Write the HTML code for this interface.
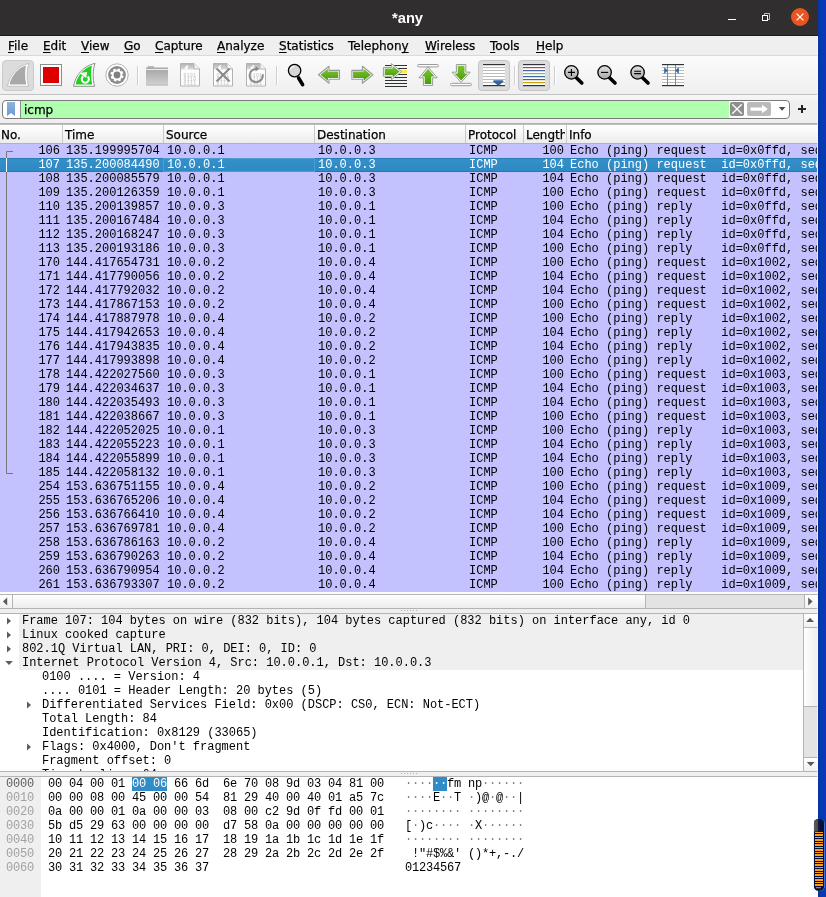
<!DOCTYPE html>
<html><head><meta charset="utf-8"><title>*any</title>
<style>
*{box-sizing:border-box;margin:0;padding:0}
html,body{width:826px;height:897px;overflow:hidden}
body{background:#063ab0;font-family:"DejaVu Sans","Liberation Sans",sans-serif;font-size:12px;color:#000;position:relative}
#desk{position:absolute;left:818px;top:0;width:8px;height:897px;background:linear-gradient(90deg,#07319f,#053ab3 35%,#063bb2)}
#win{position:absolute;left:0;top:0;width:818px;height:897px;background:#efefef;overflow:hidden;will-change:transform}
.abs{position:absolute}
#title{left:0;top:0;width:818px;height:35px;background:#302e2f}
#titleline{left:0;top:35px;width:818px;height:1px;background:#1c1b1c}
#title .t{position:absolute;left:392px;top:8px;color:#fff;font-weight:bold;font-size:14.7px;line-height:20px;font-family:"Liberation Sans",sans-serif;white-space:nowrap}
#menubar{left:0;top:36px;width:818px;height:19px;background:#efefef}
#menubar span{-webkit-text-stroke:0.25px #000;position:absolute;top:3px;font-size:12px;line-height:14px;white-space:nowrap}
#menubar u{text-decoration:underline;text-underline-offset:2px;text-decoration-thickness:1px}
#mline{left:0;top:55px;width:818px;height:1px;background:#d9d9d9}
#toolbar{left:0;top:56px;width:818px;height:38px;background:linear-gradient(#fbfbfb,#efefef)}
#tline{left:0;top:94px;width:818px;height:1px;background:#c3c3c3}
#filterbar{left:0;top:95px;width:818px;height:28px;background:linear-gradient(#f7f7f7,#efefef 30%)}
#finput{left:2px;top:100px;width:788px;height:19px;border:1px solid #7b7b7b;border-radius:4px;background:#fff;overflow:hidden}
#fgreen{left:17px;top:0;width:709px;height:17px;background:#afffaf;border-left:1px solid #8f8f8f}
#ftext{-webkit-text-stroke:0.25px #000;left:24px;top:103px;font-size:12px;line-height:14px}
/* packet list */
#plist{left:0;top:123px;width:818px;height:470px;background:#c4c1ff}
#pheadtop{left:0;top:123px;width:818px;height:2px;background:linear-gradient(#a9a9a9,#c6c6c6)}
#phead{left:0;top:125px;width:818px;height:19px;background:linear-gradient(#ffffff,#ececec);border-bottom:1px solid #b2b2b2}
#phead span{-webkit-text-stroke:0.25px #000;position:absolute;top:3px;font-size:12px;line-height:14px;white-space:nowrap}
#phead i{position:absolute;top:0;width:1px;height:18px;background:#c9c9c9}
#rows{left:0;top:144px;width:817px;height:448px;overflow:hidden;font-family:"Liberation Mono",monospace;font-size:12px;background:#c4c1ff}
.r{position:relative;height:14px;line-height:14px;white-space:pre}
.r span{position:absolute;top:0;height:14px}
.r.sel{background:linear-gradient(#3391cc,#2f88c1);color:#fff;box-shadow:inset 0 1px 0 #2a7db4,inset 0 -1px 0 #2878ad}
.c1{left:0;width:62px;text-align:right;padding-right:2px}
.c2{left:66px}.c3{left:167px}.c4{left:318px}.c5{left:469px}
.c6{left:524px;width:43px;text-align:right;padding-right:3px}
.c7{left:570px}
#focus{left:163px;top:14px;width:152px;height:14px;border:1px solid #4f9dd0;position:absolute}
/* scrollbars */
.sbtrack{background:#e3e3e3}
.sbbtn{background:linear-gradient(#ffffff,#f0f0f0)}
.sbh{background:linear-gradient(#ffffff,#ececec)}
.sbv{background:linear-gradient(90deg,#ffffff,#ececec)}
/* detail */
#detail{left:0;top:613px;width:818px;height:159px;background:#fff;border-top:1px solid #b4b4b4;border-bottom:1px solid #b4b4b4;overflow:hidden;font-family:"Liberation Mono",monospace;font-size:12px}
.d{position:absolute;left:0;width:804px;height:14px;line-height:14px;white-space:pre;letter-spacing:-0.018px}
.d b{position:absolute;left:19px;top:0;width:785px;height:14px;background:#efefef;font-weight:normal}
.d span{position:absolute;top:0}
.l0{left:22px}.l1{left:42px}
/* bytes */
#bytes{left:0;top:776px;width:818px;height:121px;background:#fff;border-top:1px solid #b4b4b4;overflow:hidden;font-family:"Liberation Mono",monospace;font-size:12px;letter-spacing:-0.2012px}
#boff{left:0;top:0;width:41px;height:121px;background:#efefef}
.b{position:absolute;left:0;height:14px;line-height:14px;white-space:pre;width:818px}
.b span{position:absolute;top:0}
.o{left:6px;color:#a2a2a2}
.h{left:48px}.a{left:405px}
.hs{position:absolute;background:#308cc6;height:14px;top:0}
.b em{font-style:normal;color:#fff}
.b s{text-decoration:none;color:#7d7d7d}
</style></head><body>
<div id="desk"></div>
<div id="win">
<div id="title" class="abs"><div class="t">*any</div>
<svg class="abs" style="left:710px;top:0" width="108" height="35" viewBox="710 0 108 35">
<rect x="728" y="19" width="8" height="1" fill="#fff"/>
<path d="M764.5,15 V13.5 H769.5 V19.5 H768" fill="none" stroke="#bdbdbd" stroke-width="1"/>
<rect x="762.5" y="15.5" width="5" height="5" fill="none" stroke="#fff" stroke-width="1"/>
<circle cx="800" cy="17" r="9" fill="#e95420"/>
<path d="M796.6,13.6 L803.4,20.4 M803.4,13.6 L796.6,20.4" stroke="#fff" stroke-width="1.3"/>
</svg>
</div>
<div id="titleline" class="abs"></div>
<div id="menubar" class="abs">
<span style="left:8px"><u>F</u>ile</span>
<span style="left:43px"><u>E</u>dit</span>
<span style="left:81px"><u>V</u>iew</span>
<span style="left:124px"><u>G</u>o</span>
<span style="left:155px"><u>C</u>apture</span>
<span style="left:217px"><u>A</u>nalyze</span>
<span style="left:279px"><u>S</u>tatistics</span>
<span style="left:348px">Telephon<u>y</u></span>
<span style="left:425px"><u>W</u>ireless</span>
<span style="left:490px"><u>T</u>ools</span>
<span style="left:536px"><u>H</u>elp</span>
</div>
<div id="mline" class="abs"></div>
<div id="toolbar" class="abs"></div>
<svg id="tb" class="abs" style="left:0;top:56px" width="818" height="38" viewBox="0 56 818 38">
<defs>
<linearGradient id="gg" x1="0" y1="0" x2="0" y2="1"><stop offset="0" stop-color="#7cc532"/><stop offset="1" stop-color="#4a9a0e"/></linearGradient>
<linearGradient id="lens" x1="0" y1="0" x2="0" y2="1"><stop offset="0" stop-color="#e2e2e2"/><stop offset="1" stop-color="#a8a8a8"/></linearGradient>
<linearGradient id="fold" x1="0" y1="0" x2="0" y2="1"><stop offset="0" stop-color="#a4a4a4"/><stop offset="1" stop-color="#d2d2d2"/></linearGradient>
<linearGradient id="fhead" x1="0" y1="0" x2="0" y2="1"><stop offset="0" stop-color="#b4b4b4"/><stop offset="1" stop-color="#dcdcdc"/></linearGradient>
<g id="fileic">
<path d="M0.5,0.5 H14 L19.5,6 V23 H0.5 Z" fill="#fdfdfd" stroke="#b2b2b2"/>
<path d="M1,1 H14 L14,6.5 H1 Z" fill="url(#fhead)"/>
<path d="M4.5,6.5 C4.5,3.5 6.5,2 8.5,2 C7.5,3.5 7.6,5 8.3,6.5 Z" fill="#fafafa"/>
<path d="M14,0.5 V6 H19.5" fill="#f4f4f4" stroke="#b2b2b2"/>
<text x="3.6" y="13.9" font-family="Liberation Mono,monospace" font-size="4.8" fill="#bdbdbd" textLength="12.6">0101</text>
<text x="3.6" y="18.2" font-family="Liberation Mono,monospace" font-size="4.8" fill="#bdbdbd" textLength="12.6">0110</text>
<text x="3.6" y="22.4" font-family="Liberation Mono,monospace" font-size="4.8" fill="#bdbdbd" textLength="12.6">0111</text>
</g>
<g id="mag">
<line x1="4.2" y1="4.6" x2="10.4" y2="10.6" stroke="#000" stroke-width="3.6" stroke-linecap="round"/>
<circle cx="0" cy="0" r="6.7" fill="url(#lens)" stroke="#000" stroke-width="1.3"/>
</g>
</defs>
<!-- pressed button bgs -->
<rect x="2.5" y="60.5" width="31" height="30" rx="3.5" fill="#dcdcdc" stroke="#cbcbcb"/>
<rect x="478.5" y="60.5" width="31" height="30" rx="3.5" fill="#dcdcdc" stroke="#c4c4c4"/>
<rect x="518.5" y="60.5" width="31" height="30" rx="3.5" fill="#dcdcdc" stroke="#c4c4c4"/>
<!-- separators -->
<g>
<rect x="137" y="66" width="1" height="19" fill="#cfcfcf"/><rect x="138" y="66" width="1" height="19" fill="#fff"/>
<rect x="276" y="66" width="1" height="19" fill="#cfcfcf"/><rect x="277" y="66" width="1" height="19" fill="#fff"/>
<rect x="514" y="66" width="1" height="19" fill="#cfcfcf"/><rect x="515" y="66" width="1" height="19" fill="#fff"/>
<rect x="554" y="66" width="1" height="19" fill="#cfcfcf"/><rect x="555" y="66" width="1" height="19" fill="#fff"/>
</g>
<!-- 1 shark fin gray -->
<path d="M7.5,86.3 C9.5,75 17.5,66 29,63.3 C26.6,70.5 26.6,79 28.6,86.3 Z" fill="#fff" stroke="#bcbcbc" stroke-width="0.9" stroke-linejoin="round"/>
<path d="M9.6,84.4 C11.5,75.5 18,68.4 25.9,65.6 C24.7,71.5 24.8,78.5 26.2,84.4 Z" fill="#a9a9a9"/>
<!-- 2 stop -->
<rect x="40.5" y="64.5" width="21" height="21" fill="#fff" stroke="#8e8e8e"/>
<rect x="43" y="67" width="16" height="16" fill="#dc0000"/>
<!-- 3 restart fin -->
<path d="M73.5,86.3 C75.5,75 83.5,66 95,63.3 C92.6,70.5 92.6,79 94.6,86.3 Z" fill="#fff" stroke="#8e8e8e" stroke-width="1" stroke-linejoin="round"/>
<path d="M75.6,84.4 C77.5,75.5 84,68.4 91.9,65.6 C90.7,71.5 90.8,78.5 92.2,84.4 Z" fill="#1fd01f"/>
<path d="M87.7,76.6 A3.55,3.55 0 1 1 83.2,76.3" fill="none" stroke="#fff" stroke-width="2.1"/>
<path d="M79.3,73 L87.1,72 L86.2,77.9 Z" fill="#fff"/>
<!-- 4 gear -->
<circle cx="117" cy="75" r="11.2" fill="#fff" stroke="#b4b4b4" stroke-width="1"/>
<circle cx="117" cy="75" r="8.9" fill="#8b8b8b"/>
<g fill="#fff" transform="translate(117 75) rotate(18)">
<circle r="5.3"/>
<g id="teeth"><rect x="-1.35" y="-6.6" width="2.7" height="13.2" rx="0.4"/><rect x="-6.6" y="-1.35" width="13.2" height="2.7" rx="0.4"/></g>
<use href="#teeth" transform="rotate(45)"/>
</g>
<circle cx="117" cy="75" r="3.4" fill="#808080"/>
<!-- 5 folder -->
<path d="M147.5,68 V66.6 Q147.5,66 148.2,66 H153.3 Q154,66 154,66.6 V68 Z" fill="#bdbdbd"/>
<rect x="146" y="67.7" width="22" height="17.8" rx="0.8" fill="url(#fold)"/>
<rect x="146" y="67.7" width="22" height="1.2" fill="#a2a2a2"/>
<rect x="146" y="68.9" width="22" height="1" fill="#f4f4f4"/>
<rect x="146" y="84.6" width="22" height="0.9" fill="#b8b8b8"/>
<!-- 6,7,8 files -->
<use href="#fileic" x="180" y="63"/>
<use href="#fileic" x="213" y="63"/>
<use href="#fileic" x="246" y="63"/>
<path d="M216.6,68.6 L229.6,81.6 M229.6,68.6 L216.6,81.6" stroke="#8a8a8a" stroke-width="2.1" fill="none"/>
<path d="M256.6,69 A6.6,6.6 0 1 0 262.6,74.2" fill="none" stroke="#8a8a8a" stroke-width="2"/>
<path d="M255.6,66 L259.4,68.7 L255.6,71.4 Z" fill="#8a8a8a"/>
<!-- 9 find -->
<g transform="translate(294.6 70.6)">
<line x1="4" y1="7.4" x2="8" y2="14" stroke="#000" stroke-width="3.6" stroke-linecap="round"/>
<circle r="6.2" fill="#d6d6d6" stroke="#000" stroke-width="1.3"/>
<path d="M-4.2,-1.4 A4.4,4.4 0 0 1 -0.6,-4.4" fill="none" stroke="#fff" stroke-width="1.1" stroke-linecap="round"/>
</g>
<!-- 10 left arrow, 11 right arrow -->
<g id="larr">
<path d="M318.5,74.8 L329,66.3 V70.4 H339.5 V79.2 H329 V83.3 Z" fill="#fff" stroke="#999" stroke-width="1.1" stroke-linejoin="round"/>
<path d="M320.5,74.8 L327.9,68.8 V71.6 H338.3 V78 H327.9 V80.8 Z" fill="url(#gg)"/>
</g>
<use href="#larr" transform="translate(691.4 0) scale(-1 1)"/>
<!-- 12 goto -->
<g fill="#2e3436">
<rect x="385" y="65" width="22" height="1"/><rect x="385" y="68" width="22" height="1"/><rect x="385" y="74" width="22" height="1"/><rect x="385" y="77" width="22" height="1"/><rect x="385" y="80" width="22" height="1"/><rect x="385" y="83" width="22" height="1"/><rect x="385" y="86" width="22" height="1"/>
</g>
<rect x="396" y="70" width="11" height="3" fill="#fce94f"/>
<path d="M383.4,67.4 H391.4 V63.6 L401.6,71.6 L391.4,79.6 V76.2 H383.4 Z" fill="#fff" stroke="#9a9a9a" stroke-width="1" stroke-linejoin="round"/>
<path d="M384.7,68.6 H392.6 V66 L399.7,71.6 L392.6,77.2 V75 H384.7 Z" fill="url(#gg)"/>
<!-- 13 top -->
<rect x="417.5" y="64.5" width="21" height="2.4" rx="1.2" fill="#fff" stroke="#9a9a9a" stroke-width="1"/>
<path d="M428.1,66.9 L437.2,77.8 H432.6 V85.4 H423.4 V77.8 H419 Z" fill="#fff" stroke="#9a9a9a" stroke-width="1" stroke-linejoin="round"/>
<path d="M428.1,68.8 L434.6,76.6 H431.3 V84.1 H424.7 V76.6 H421.6 Z" fill="url(#gg)"/>
<!-- 14 bottom -->
<rect x="450.5" y="83.3" width="21" height="2.4" rx="1.2" fill="#fff" stroke="#9a9a9a" stroke-width="1"/>
<path d="M456.4,64.5 H465.8 V72.2 H470.2 L461.1,82.4 L452,72.2 H456.4 Z" fill="#fff" stroke="#9a9a9a" stroke-width="1" stroke-linejoin="round"/>
<path d="M457.7,65.8 H464.5 V73.4 H467.6 L461.1,80.6 L454.6,73.4 H457.7 Z" fill="url(#gg)"/>
<!-- 15 autoscroll -->
<rect x="483" y="64" width="22" height="22" fill="#fff"/>
<g fill="#babdb6"><rect x="483" y="67" width="22" height="1"/><rect x="483" y="70" width="22" height="1"/><rect x="483" y="73" width="22" height="1"/><rect x="483" y="76" width="22" height="1"/><rect x="483" y="79" width="22" height="1"/><rect x="483" y="82" width="22" height="1"/></g>
<rect x="483" y="64" width="22" height="1.2" fill="#2e3436"/><rect x="483" y="85" width="22" height="1.2" fill="#2e3436"/>
<path d="M493,81.6 Q493,80.2 494.6,80.2 H502 Q503.6,80.2 503.6,81.6 L498.9,85.6 H497.9 Z" fill="#3465a4"/>
<!-- 16 colorize -->
<rect x="523" y="64" width="22" height="22" fill="#fff"/>
<rect x="523" y="64" width="22" height="1.2" fill="#2e3436"/>
<rect x="523" y="67" width="22" height="1.2" fill="#ef2929"/>
<rect x="523" y="70" width="22" height="1.2" fill="#3465a4"/>
<rect x="523" y="73" width="22" height="1.2" fill="#73d216"/>
<rect x="523" y="76" width="22" height="1.2" fill="#3465a4"/>
<rect x="523" y="79" width="22" height="1.2" fill="#75507b"/>
<rect x="523" y="82" width="22" height="1.2" fill="#c4a000"/>
<rect x="523" y="85" width="22" height="1.2" fill="#2e3436"/>
<!-- 17-19 zoom -->
<use href="#mag" x="571.4" y="72.4"/>
<path d="M567.9,72.4 H574.9 M571.4,68.9 V75.9" stroke="#000" stroke-width="1.1"/>
<use href="#mag" x="604.6" y="72.4"/>
<path d="M601,72.4 H608.2" stroke="#000" stroke-width="1.1"/>
<use href="#mag" x="637.6" y="72.4"/>
<path d="M634.2,71.3 H641 M634.2,73.6 H641" stroke="#000" stroke-width="1.1"/>
<!-- 20 resize columns -->
<rect x="662" y="64" width="22" height="22" fill="#fff"/>
<g fill="#babdb6"><rect x="662" y="67" width="22" height="1"/><rect x="662" y="70" width="22" height="1"/><rect x="662" y="73" width="22" height="1"/><rect x="662" y="76" width="22" height="1"/><rect x="662" y="79" width="22" height="1"/><rect x="662" y="82" width="22" height="1"/></g>
<rect x="667" y="64" width="1" height="22" fill="#888a85"/><rect x="675" y="64" width="1" height="22" fill="#888a85"/>
<rect x="662" y="64" width="22" height="1.2" fill="#2e3436"/><rect x="662" y="85" width="22" height="1.2" fill="#2e3436"/>
<path d="M664.2,67.3 L667.8,70.6 L664.2,73.9 Z" fill="#3465a4"/>
<path d="M678.8,67.3 L675.2,70.6 L678.8,73.9 Z" fill="#3465a4"/>
</svg>

<div id="tline" class="abs"></div>
<div id="filterbar" class="abs"></div>
<div id="finput" class="abs"><div id="fgreen" class="abs"></div></div>
<svg class="abs" style="left:0;top:95px" width="818" height="28" viewBox="0 95 818 28">
<defs><linearGradient id="bm" x1="0" y1="0" x2="0" y2="1"><stop offset="0" stop-color="#8fb3dd"/><stop offset="1" stop-color="#6a99d0"/></linearGradient></defs>
<path d="M7,102 H15 V116 L11,113 L7,116 Z" fill="url(#bm)"/>
<rect x="730" y="102" width="14" height="14" rx="2" fill="#8d8f8a"/>
<path d="M732.2,104.2 L741.8,113.8 M741.8,104.2 L732.2,113.8" stroke="#fff" stroke-width="1.3"/>
<rect x="747" y="102" width="24" height="14" rx="2" fill="#bababa"/>
<path d="M750.6,107.4 H762 V104.8 L767.8,109 L762,113.2 V110.7 H750.6 Z" fill="#fff"/>
<path d="M778.8,107.1 H785.4 L782.1,110.7 Z" fill="#4d4d4d"/>
<path d="M798,109 H806 M802,105 V113" stroke="#232323" stroke-width="2"/>
</svg>
<div id="ftext" class="abs">icmp</div>
<div id="plist" class="abs"></div>
<div id="pheadtop" class="abs"></div>
<div id="phead" class="abs">
<span style="left:1px">No.</span><i style="left:62px"></i>
<span style="left:65px">Time</span><i style="left:163px"></i>
<span style="left:166px">Source</span><i style="left:314px"></i>
<span style="left:317px">Destination</span><i style="left:465px"></i>
<span style="left:468px">Protocol</span><i style="left:523px"></i>
<span style="left:526px;width:39px;overflow:hidden">Length</span><i style="left:566px"></i>
<span style="left:569px">Info</span>
</div>
<div id="rows" class="abs">
<div class="r"><span class="c1">106</span><span class="c2">135.199995704</span><span class="c3">10.0.0.1</span><span class="c4">10.0.0.3</span><span class="c5">ICMP</span><span class="c6">100</span><span class="c7">Echo (ping) request  id=0x0ffd, seq=1/256, ttl=64</span></div>
<div class="r sel"><span class="c1">107</span><span class="c2">135.200084490</span><span class="c3">10.0.0.1</span><span class="c4">10.0.0.3</span><span class="c5">ICMP</span><span class="c6">104</span><span class="c7">Echo (ping) request  id=0x0ffd, seq=1/256, ttl=64</span></div>
<div class="r"><span class="c1">108</span><span class="c2">135.200085579</span><span class="c3">10.0.0.1</span><span class="c4">10.0.0.3</span><span class="c5">ICMP</span><span class="c6">104</span><span class="c7">Echo (ping) request  id=0x0ffd, seq=1/256, ttl=64</span></div>
<div class="r"><span class="c1">109</span><span class="c2">135.200126359</span><span class="c3">10.0.0.1</span><span class="c4">10.0.0.3</span><span class="c5">ICMP</span><span class="c6">100</span><span class="c7">Echo (ping) request  id=0x0ffd, seq=1/256, ttl=64</span></div>
<div class="r"><span class="c1">110</span><span class="c2">135.200139857</span><span class="c3">10.0.0.3</span><span class="c4">10.0.0.1</span><span class="c5">ICMP</span><span class="c6">100</span><span class="c7">Echo (ping) reply    id=0x0ffd, seq=1/256, ttl=64</span></div>
<div class="r"><span class="c1">111</span><span class="c2">135.200167484</span><span class="c3">10.0.0.3</span><span class="c4">10.0.0.1</span><span class="c5">ICMP</span><span class="c6">104</span><span class="c7">Echo (ping) reply    id=0x0ffd, seq=1/256, ttl=64</span></div>
<div class="r"><span class="c1">112</span><span class="c2">135.200168247</span><span class="c3">10.0.0.3</span><span class="c4">10.0.0.1</span><span class="c5">ICMP</span><span class="c6">104</span><span class="c7">Echo (ping) reply    id=0x0ffd, seq=1/256, ttl=64</span></div>
<div class="r"><span class="c1">113</span><span class="c2">135.200193186</span><span class="c3">10.0.0.3</span><span class="c4">10.0.0.1</span><span class="c5">ICMP</span><span class="c6">100</span><span class="c7">Echo (ping) reply    id=0x0ffd, seq=1/256, ttl=64</span></div>
<div class="r"><span class="c1">170</span><span class="c2">144.417654731</span><span class="c3">10.0.0.2</span><span class="c4">10.0.0.4</span><span class="c5">ICMP</span><span class="c6">100</span><span class="c7">Echo (ping) request  id=0x1002, seq=1/256, ttl=64</span></div>
<div class="r"><span class="c1">171</span><span class="c2">144.417790056</span><span class="c3">10.0.0.2</span><span class="c4">10.0.0.4</span><span class="c5">ICMP</span><span class="c6">104</span><span class="c7">Echo (ping) request  id=0x1002, seq=1/256, ttl=64</span></div>
<div class="r"><span class="c1">172</span><span class="c2">144.417792032</span><span class="c3">10.0.0.2</span><span class="c4">10.0.0.4</span><span class="c5">ICMP</span><span class="c6">104</span><span class="c7">Echo (ping) request  id=0x1002, seq=1/256, ttl=64</span></div>
<div class="r"><span class="c1">173</span><span class="c2">144.417867153</span><span class="c3">10.0.0.2</span><span class="c4">10.0.0.4</span><span class="c5">ICMP</span><span class="c6">100</span><span class="c7">Echo (ping) request  id=0x1002, seq=1/256, ttl=64</span></div>
<div class="r"><span class="c1">174</span><span class="c2">144.417887978</span><span class="c3">10.0.0.4</span><span class="c4">10.0.0.2</span><span class="c5">ICMP</span><span class="c6">100</span><span class="c7">Echo (ping) reply    id=0x1002, seq=1/256, ttl=64</span></div>
<div class="r"><span class="c1">175</span><span class="c2">144.417942653</span><span class="c3">10.0.0.4</span><span class="c4">10.0.0.2</span><span class="c5">ICMP</span><span class="c6">104</span><span class="c7">Echo (ping) reply    id=0x1002, seq=1/256, ttl=64</span></div>
<div class="r"><span class="c1">176</span><span class="c2">144.417943835</span><span class="c3">10.0.0.4</span><span class="c4">10.0.0.2</span><span class="c5">ICMP</span><span class="c6">104</span><span class="c7">Echo (ping) reply    id=0x1002, seq=1/256, ttl=64</span></div>
<div class="r"><span class="c1">177</span><span class="c2">144.417993898</span><span class="c3">10.0.0.4</span><span class="c4">10.0.0.2</span><span class="c5">ICMP</span><span class="c6">100</span><span class="c7">Echo (ping) reply    id=0x1002, seq=1/256, ttl=64</span></div>
<div class="r"><span class="c1">178</span><span class="c2">144.422027560</span><span class="c3">10.0.0.3</span><span class="c4">10.0.0.1</span><span class="c5">ICMP</span><span class="c6">100</span><span class="c7">Echo (ping) request  id=0x1003, seq=1/256, ttl=64</span></div>
<div class="r"><span class="c1">179</span><span class="c2">144.422034637</span><span class="c3">10.0.0.3</span><span class="c4">10.0.0.1</span><span class="c5">ICMP</span><span class="c6">104</span><span class="c7">Echo (ping) request  id=0x1003, seq=1/256, ttl=64</span></div>
<div class="r"><span class="c1">180</span><span class="c2">144.422035493</span><span class="c3">10.0.0.3</span><span class="c4">10.0.0.1</span><span class="c5">ICMP</span><span class="c6">104</span><span class="c7">Echo (ping) request  id=0x1003, seq=1/256, ttl=64</span></div>
<div class="r"><span class="c1">181</span><span class="c2">144.422038667</span><span class="c3">10.0.0.3</span><span class="c4">10.0.0.1</span><span class="c5">ICMP</span><span class="c6">100</span><span class="c7">Echo (ping) request  id=0x1003, seq=1/256, ttl=64</span></div>
<div class="r"><span class="c1">182</span><span class="c2">144.422052025</span><span class="c3">10.0.0.1</span><span class="c4">10.0.0.3</span><span class="c5">ICMP</span><span class="c6">100</span><span class="c7">Echo (ping) reply    id=0x1003, seq=1/256, ttl=64</span></div>
<div class="r"><span class="c1">183</span><span class="c2">144.422055223</span><span class="c3">10.0.0.1</span><span class="c4">10.0.0.3</span><span class="c5">ICMP</span><span class="c6">104</span><span class="c7">Echo (ping) reply    id=0x1003, seq=1/256, ttl=64</span></div>
<div class="r"><span class="c1">184</span><span class="c2">144.422055899</span><span class="c3">10.0.0.1</span><span class="c4">10.0.0.3</span><span class="c5">ICMP</span><span class="c6">104</span><span class="c7">Echo (ping) reply    id=0x1003, seq=1/256, ttl=64</span></div>
<div class="r"><span class="c1">185</span><span class="c2">144.422058132</span><span class="c3">10.0.0.1</span><span class="c4">10.0.0.3</span><span class="c5">ICMP</span><span class="c6">100</span><span class="c7">Echo (ping) reply    id=0x1003, seq=1/256, ttl=64</span></div>
<div class="r"><span class="c1">254</span><span class="c2">153.636751155</span><span class="c3">10.0.0.4</span><span class="c4">10.0.0.2</span><span class="c5">ICMP</span><span class="c6">100</span><span class="c7">Echo (ping) request  id=0x1009, seq=1/256, ttl=64</span></div>
<div class="r"><span class="c1">255</span><span class="c2">153.636765206</span><span class="c3">10.0.0.4</span><span class="c4">10.0.0.2</span><span class="c5">ICMP</span><span class="c6">104</span><span class="c7">Echo (ping) request  id=0x1009, seq=1/256, ttl=64</span></div>
<div class="r"><span class="c1">256</span><span class="c2">153.636766410</span><span class="c3">10.0.0.4</span><span class="c4">10.0.0.2</span><span class="c5">ICMP</span><span class="c6">104</span><span class="c7">Echo (ping) request  id=0x1009, seq=1/256, ttl=64</span></div>
<div class="r"><span class="c1">257</span><span class="c2">153.636769781</span><span class="c3">10.0.0.4</span><span class="c4">10.0.0.2</span><span class="c5">ICMP</span><span class="c6">100</span><span class="c7">Echo (ping) request  id=0x1009, seq=1/256, ttl=64</span></div>
<div class="r"><span class="c1">258</span><span class="c2">153.636786163</span><span class="c3">10.0.0.2</span><span class="c4">10.0.0.4</span><span class="c5">ICMP</span><span class="c6">100</span><span class="c7">Echo (ping) reply    id=0x1009, seq=1/256, ttl=64</span></div>
<div class="r"><span class="c1">259</span><span class="c2">153.636790263</span><span class="c3">10.0.0.2</span><span class="c4">10.0.0.4</span><span class="c5">ICMP</span><span class="c6">104</span><span class="c7">Echo (ping) reply    id=0x1009, seq=1/256, ttl=64</span></div>
<div class="r"><span class="c1">260</span><span class="c2">153.636790954</span><span class="c3">10.0.0.2</span><span class="c4">10.0.0.4</span><span class="c5">ICMP</span><span class="c6">104</span><span class="c7">Echo (ping) reply    id=0x1009, seq=1/256, ttl=64</span></div>
<div class="r"><span class="c1">261</span><span class="c2">153.636793307</span><span class="c3">10.0.0.2</span><span class="c4">10.0.0.4</span><span class="c5">ICMP</span><span class="c6">100</span><span class="c7">Echo (ping) reply    id=0x1009, seq=1/256, ttl=64</span></div>
<div id="focus"></div>
<svg class="abs" style="left:0;top:0" width="30" height="448">
<path d="M13,7.5 H6.5 V14" fill="none" stroke="#777" stroke-width="1"/>
<path d="M6.5,14 V28" fill="none" stroke="#fff" stroke-width="1"/>
<path d="M6.5,28 V329.5 H13" fill="none" stroke="#777" stroke-width="1"/>
</svg>
</div>
<!-- h scrollbar -->
<div class="abs" style="left:0;top:592px;width:818px;height:2px;background:#fbfbfb"></div>
<div class="abs sbtrack" style="left:0;top:594px;width:818px;height:15px;border-top:1px solid #b4b4b4;border-bottom:1px solid #b4b4b4"></div>
<div class="abs sbbtn" style="left:0;top:595px;width:13px;height:13px;border-right:1px solid #b4b4b4"></div>
<div class="abs sbh" style="left:13px;top:595px;width:633px;height:13px;border-right:1px solid #b4b4b4"></div>
<div class="abs sbbtn" style="left:804px;top:595px;width:14px;height:13px;border-left:1px solid #b4b4b4"></div>
<svg class="abs" style="left:0;top:594px" width="818" height="15"><path d="M7.2,3.6 V11.4 L3,7.5 Z" fill="#5a5a5a"/><path d="M808.2,3.6 V11.4 L812.6,7.5 Z" fill="#5a5a5a"/></svg>
<svg class="abs" style="left:400px;top:609px" width="20" height="4"><g fill="#b2b2b2"><rect x="1" y="1" width="1" height="1"/><rect x="4" y="1" width="1" height="1"/><rect x="7" y="1" width="1" height="1"/><rect x="10" y="1" width="1" height="1"/><rect x="13" y="1" width="1" height="1"/><rect x="16" y="1" width="1" height="1"/></g></svg>
<svg class="abs" style="left:400px;top:772px" width="20" height="4"><g fill="#b2b2b2"><rect x="1" y="1" width="1" height="1"/><rect x="4" y="1" width="1" height="1"/><rect x="7" y="1" width="1" height="1"/><rect x="10" y="1" width="1" height="1"/><rect x="13" y="1" width="1" height="1"/><rect x="16" y="1" width="1" height="1"/></g></svg>
<!-- detail pane -->
<div id="detail" class="abs">
<div class="d" style="top:0px"><b></b><svg class="abs" style="left:0px;top:0" width="19" height="14"><path d="M7,3.4 L11,7 L7,10.6 Z" fill="#5c5c5c"/></svg><span class="l0">Frame 107: 104 bytes on wire (832 bits), 104 bytes captured (832 bits) on interface any, id 0</span></div>
<div class="d" style="top:14px"><b></b><svg class="abs" style="left:0px;top:0" width="19" height="14"><path d="M7,3.4 L11,7 L7,10.6 Z" fill="#5c5c5c"/></svg><span class="l0">Linux cooked capture</span></div>
<div class="d" style="top:28px"><b></b><svg class="abs" style="left:0px;top:0" width="19" height="14"><path d="M7,3.4 L11,7 L7,10.6 Z" fill="#5c5c5c"/></svg><span class="l0">802.1Q Virtual LAN, PRI: 0, DEI: 0, ID: 0</span></div>
<div class="d" style="top:42px"><b></b><svg class="abs" style="left:0px;top:0" width="19" height="14"><path d="M5.2,5 H12.9 L9.05,8.9 Z" fill="#5c5c5c"/></svg><span class="l0">Internet Protocol Version 4, Src: 10.0.0.1, Dst: 10.0.0.3</span></div>
<div class="d" style="top:56px"><span class="l1">0100 .... = Version: 4</span></div>
<div class="d" style="top:70px"><span class="l1">.... 0101 = Header Length: 20 bytes (5)</span></div>
<div class="d" style="top:84px"><svg class="abs" style="left:20px;top:0" width="19" height="14"><path d="M7,3.4 L11,7 L7,10.6 Z" fill="#5c5c5c"/></svg><span class="l1">Differentiated Services Field: 0x00 (DSCP: CS0, ECN: Not-ECT)</span></div>
<div class="d" style="top:98px"><span class="l1">Total Length: 84</span></div>
<div class="d" style="top:112px"><span class="l1">Identification: 0x8129 (33065)</span></div>
<div class="d" style="top:126px"><svg class="abs" style="left:20px;top:0" width="19" height="14"><path d="M7,3.4 L11,7 L7,10.6 Z" fill="#5c5c5c"/></svg><span class="l1">Flags: 0x4000, Don't fragment</span></div>
<div class="d" style="top:140px"><span class="l1">Fragment offset: 0</span></div>
<div class="d" style="top:154px"><span class="l1">Time to live: 64</span></div>
<div class="abs sbtrack" style="left:803px;top:0;width:15px;height:157px;border-left:1px solid #b4b4b4"></div>
<div class="abs sbbtn" style="left:804px;top:0;width:14px;height:14px;border-bottom:1px solid #b4b4b4"></div>
<div class="abs sbv" style="left:804px;top:14px;width:14px;height:79px;border-bottom:1px solid #b4b4b4"></div>
<div class="abs sbbtn" style="left:804px;top:143px;width:14px;height:14px;border-top:1px solid #b4b4b4"></div>
<svg class="abs" style="left:804px;top:0" width="14" height="157"><path d="M2.2,8 H10 L6.1,3.8 Z" fill="#5a5a5a"/><path d="M2.8,148 H10.6 L6.7,152.2 Z" fill="#5a5a5a"/></svg>
</div>
<!-- bytes pane -->
<div id="bytes" class="abs">
<div id="boff" class="abs"></div>
<div class="b" style="top:0px"><i class="hs" style="left:132px;width:35px"></i><i class="hs" style="left:433px;width:14px"></i><span class="o" style="color:#5e5e5e">0000</span><span class="h">00 04 00 01 <em>00 06</em> 66 6d  6e 70 08 9d 03 04 81 00</span><span class="a"><s>····</s><em>··</em>fm np<s>······</s></span></div>
<div class="b" style="top:14px"><span class="o">0010</span><span class="h">00 00 08 00 45 00 00 54  81 29 40 00 40 01 a5 7c</span><span class="a"><s>····</s>E<s>··</s>T <s>·</s>)@<s>·</s>@<s>··</s>|</span></div>
<div class="b" style="top:28px"><span class="o">0020</span><span class="h">0a 00 00 01 0a 00 00 03  08 00 c2 9d 0f fd 00 01</span><span class="a"><s>········</s> <s>········</s></span></div>
<div class="b" style="top:42px"><span class="o">0030</span><span class="h">5b d5 29 63 00 00 00 00  d7 58 0a 00 00 00 00 00</span><span class="a">[<s>·</s>)c<s>····</s> <s>·</s>X<s>······</s></span></div>
<div class="b" style="top:56px"><span class="o">0040</span><span class="h">10 11 12 13 14 15 16 17  18 19 1a 1b 1c 1d 1e 1f</span><span class="a"><s>········</s> <s>········</s></span></div>
<div class="b" style="top:70px"><span class="o">0050</span><span class="h">20 21 22 23 24 25 26 27  28 29 2a 2b 2c 2d 2e 2f</span><span class="a"> !"#$%&amp;' ()*+,-./</span></div>
<div class="b" style="top:84px"><span class="o">0060</span><span class="h">30 31 32 33 34 35 36 37</span><span class="a">01234567</span></div>
</div>
<div class="abs" style="left:817px;top:36px;width:1px;height:861px;background:rgba(255,255,255,0.6)"></div>
</div>
<!-- outside-window widget on the desktop strip -->
<svg style="position:absolute;left:806px;top:815px" width="20" height="80" viewBox="806 815 20 80" shape-rendering="auto">
<defs><linearGradient id="pt" x1="0" y1="0" x2="1" y2="0"><stop offset="0" stop-color="#5b5b5f"/><stop offset="0.38" stop-color="#4a4b52"/><stop offset="0.46" stop-color="#0a1540"/><stop offset="1" stop-color="#03103c"/></linearGradient></defs>
<rect x="812.6" y="818.4" width="3" height="73" rx="1.5" fill="#fff"/>
<rect x="813.9" y="818.9" width="11" height="72" rx="4.6" fill="#4f78d6"/>
<rect x="814" y="819" width="10" height="71.8" rx="4.4" fill="#04103c"/>
<path d="M814,831.4 V823.4 Q814,819 818.4,819 H819.6 Q824,819 824,823.4 V831.4 Z" fill="url(#pt)"/>
<g fill="#fb9c16">
<rect x="815" y="832" width="8" height="1"/><rect x="815" y="834" width="8" height="2"/><rect x="815" y="837" width="8" height="1"/><rect x="815" y="839" width="8" height="2"/><rect x="815" y="842" width="8" height="1"/><rect x="815" y="844" width="8" height="2"/><rect x="815" y="847" width="8" height="1"/><rect x="815" y="849" width="8" height="2"/><rect x="815" y="852" width="8" height="1"/><rect x="815" y="854" width="8" height="2"/><rect x="815" y="857" width="8" height="1"/><rect x="815" y="859" width="8" height="2"/><rect x="815" y="862" width="8" height="1"/><rect x="815" y="864" width="8" height="2"/><rect x="815" y="867" width="8" height="1"/><rect x="815" y="869" width="8" height="2"/><rect x="815" y="872" width="8" height="1"/><rect x="815" y="874" width="8" height="2"/><rect x="815" y="877" width="8" height="1"/><rect x="815" y="879" width="8" height="2"/><rect x="815" y="882" width="8" height="1"/><rect x="815" y="884" width="8" height="2"/>
<rect x="815.8" y="887.2" width="5" height="1"/>
</g>
</svg>
</body></html>
